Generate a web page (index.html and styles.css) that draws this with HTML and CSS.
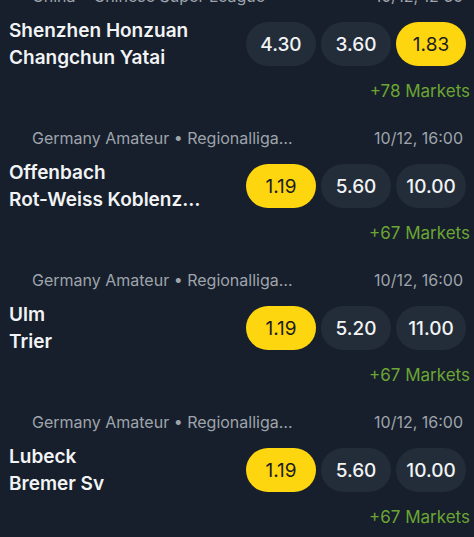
FILE: index.html
```html
<!DOCTYPE html>
<html lang="en">
<head>
    <meta charset="UTF-8">
    <meta name="viewport" content="width=device-width, initial-scale=1.0">
    <title>Matches</title>
    <link rel="stylesheet" href="styles.css">
</head>
<body>
    <div class="match-list">
        <div class="match">
            <div class="match-header">
                <span class="flag"></span>
                <span class="league">China • Chinese Super League</span>
                <span class="date">10/12, 12:35</span>
            </div>
            <div class="match-row">
                <div class="teams">
                    <div class="team">Shenzhen Honzuan</div>
                    <div class="team">Changchun Yatai</div>
                </div>
                <div class="odds">
                    <button class="odd">4.30</button>
                    <button class="odd">3.60</button>
                    <button class="odd selected">1.83</button>
                </div>
            </div>
            <div class="markets">+78 Markets</div>
        </div>

        <div class="match">
            <div class="match-header">
                <span class="flag"></span>
                <span class="league">Germany Amateur • Regionalliga Southwest</span>
                <span class="date">10/12, 16:00</span>
            </div>
            <div class="match-row">
                <div class="teams">
                    <div class="team">Offenbach</div>
                    <div class="team">Rot-Weiss Koblenz Oberwerth</div>
                </div>
                <div class="odds">
                    <button class="odd selected">1.19</button>
                    <button class="odd">5.60</button>
                    <button class="odd">10.00</button>
                </div>
            </div>
            <div class="markets">+67 Markets</div>
        </div>

        <div class="match">
            <div class="match-header">
                <span class="flag"></span>
                <span class="league">Germany Amateur • Regionalliga Southwest</span>
                <span class="date">10/12, 16:00</span>
            </div>
            <div class="match-row">
                <div class="teams">
                    <div class="team">Ulm</div>
                    <div class="team">Trier</div>
                </div>
                <div class="odds">
                    <button class="odd selected">1.19</button>
                    <button class="odd">5.20</button>
                    <button class="odd">11.00</button>
                </div>
            </div>
            <div class="markets">+67 Markets</div>
        </div>

        <div class="match">
            <div class="match-header">
                <span class="flag"></span>
                <span class="league">Germany Amateur • Regionalliga North</span>
                <span class="date">10/12, 16:00</span>
            </div>
            <div class="match-row">
                <div class="teams">
                    <div class="team">Lubeck</div>
                    <div class="team">Bremer Sv</div>
                </div>
                <div class="odds">
                    <button class="odd selected">1.19</button>
                    <button class="odd">5.60</button>
                    <button class="odd">10.00</button>
                </div>
            </div>
            <div class="markets">+67 Markets</div>
        </div>
    </div>
</body>
</html>
```

FILE: styles.css
```css
body {
    font-family: Inter, "Noto Sans", sans-serif;
    background-color: #161f2b;
    color: #f2f3f5;
    margin: 0;
    overflow: hidden;
}
.match-list {
    margin-top: -14px;
}
.match {
    display: flex;
    flex-direction: column;
    padding-bottom: 27px;
}
.match-header {
    display: flex;
    align-items: center;
    height: 20px;
    padding: 0 11px 0 9px;
    font-size: 16px;
    color: #9fa4ac;
}
.flag {
    width: 16px;
    height: 16px;
    margin-right: 7px;
    flex-shrink: 0;
}
.league {
    width: 264px;
    white-space: nowrap;
    overflow: hidden;
    text-overflow: ellipsis;
}
.date {
    margin-left: auto;
    white-space: nowrap;
}
.match-row {
    display: flex;
    align-items: center;
    height: 44px;
    margin-top: 16px;
    padding: 0 8px 0 9px;
}
.teams {
    width: 194px;
    font-size: 19px;
    font-weight: 600;
    line-height: 27px;
}
.team {
    white-space: nowrap;
    overflow: hidden;
    text-overflow: ellipsis;
}
.odds {
    display: flex;
    gap: 5px;
    margin-left: auto;
}
.odd {
    width: 70px;
    height: 44px;
    border: none;
    border-radius: 22px;
    background-color: #232d39;
    color: #f2f3f5;
    font-family: inherit;
    font-size: 19px;
    font-weight: 500;
    padding: 0;
}
.odd.selected {
    background-color: #fdd60f;
    color: #1b1d21;
    font-weight: 400;
}
.markets {
    margin-top: 15px;
    height: 20px;
    line-height: 20px;
    padding-right: 4px;
    text-align: right;
    font-size: 17px;
    color: #6ca534;
}
```
